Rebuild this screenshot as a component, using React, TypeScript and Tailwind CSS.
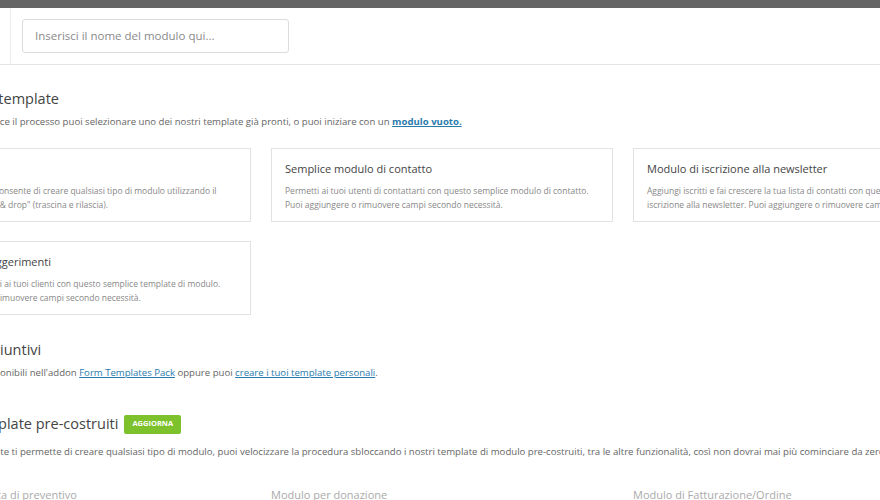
import React from 'react';

const font = { fontFamily: '"Open Sans", "Noto Sans", sans-serif' };

type Card = { title: string; lines: string[] };

const freeCards: Card[] = [
    {
        title: 'Modulo vuoto',
        lines: [
            'Il modulo vuoto ti consente di creare qualsiasi tipo di modulo utilizzando il',
            'il costruttore "drag & drop" (trascina e rilascia).',
        ],
    },
    {
        title: 'Semplice modulo di contatto',
        lines: [
            'Permetti ai tuoi utenti di contattarti con questo semplice modulo di contatto.',
            'Puoi aggiungere o rimuovere campi secondo necessità.',
        ],
    },
    {
        title: 'Modulo di iscrizione alla newsletter',
        lines: [
            'Aggiungi iscritti e fai crescere la tua lista di contatti con questo modulo di',
            'iscrizione alla newsletter. Puoi aggiungere o rimuovere campi secondo necessità.',
        ],
    },
    {
        title: 'Modulo dei suggerimenti',
        lines: [
            'Chiedi suggerimenti ai tuoi clienti con questo semplice template di modulo.',
            'Puoi aggiungere o rimuovere campi secondo necessità.',
        ],
    },
];

const lockedCards = ['Modulo di richiesta di preventivo', 'Modulo per donazione', 'Modulo di Fatturazione/Ordine'];

function TemplateCard({ card }: { card: Card }) {
    return (
        <div className="h-[74px] border border-[#e2e2e2] bg-white px-[13px] pt-[11px]">
            <h4 className="text-[11px] leading-[18px] text-[#444] whitespace-nowrap">{card.title}</h4>
            <p className="mt-[6px] text-[8.5px] leading-[14px] text-[#888] whitespace-nowrap">
                {card.lines[0]}
                <br />
                {card.lines[1]}
            </p>
        </div>
    );
}

export default function App() {
    return (
        <div className="w-[880px] h-[500px] overflow-hidden bg-white" style={font}>
            <div className="h-2 bg-[#656565]"></div>

            {/* Barra del nome */}
            <div className="flex h-[57px] border-b border-[#e3e3e3]">
                <div className="w-[11px] border-r border-[#ececec]"></div>
                <div className="pl-[11px] pt-[11px]">
                    <div className="w-[267px] h-[34px] border border-[#dcdcdc] rounded-[3px] flex items-center px-[12px]">
                        <span className="text-[11.5px] text-[#8a8a8a]">Inserisci il nome del modulo qui...</span>
                    </div>
                </div>
            </div>

            <div className="ml-[-91px] w-[1100px]">
                <h2 className="mt-[23px] text-[14.5px] leading-[22px] text-[#444] whitespace-nowrap">Seleziona un template</h2>
                <p className="mt-[4px] text-[9.6px] leading-[16px] text-[#666] whitespace-nowrap">
                    Per rendere più veloce il processo puoi selezionare uno dei nostri template già pronti, o puoi iniziare con un{' '}
                    <a className="font-bold text-[#2a7bad] underline">modulo vuoto.</a>
                </p>

                <div className="mt-[18px] grid grid-cols-[342px_342px_342px] gap-x-[20px] gap-y-[19px]">
                    {freeCards.map((c) => (
                        <TemplateCard key={c.title} card={c} />
                    ))}
                </div>

                <h2 className="mt-[24px] text-[14.5px] leading-[22px] text-[#444] whitespace-nowrap">Template aggiuntivi</h2>
                <p className="mt-[4px] text-[9.6px] leading-[16px] text-[#666] whitespace-nowrap">
                    I template sono disponibili nell'addon{' '}
                    <a className="text-[#2a7bad] underline">Form Templates Pack</a> oppure puoi{' '}
                    <a className="text-[#2a7bad] underline">creare i tuoi template personali</a>.
                </p>

                <div className="mt-[32px] flex items-center gap-[6px]">
                    <h2 className="text-[14.5px] leading-[22px] text-[#444] whitespace-nowrap">Sblocca i template pre-costruiti</h2>
                    <span className="h-[19px] px-[8px] rounded-[2px] bg-[#7dc22c] text-white text-[7.5px] font-bold flex items-center">
                        AGGIORNA
                    </span>
                </div>
                <p className="mt-[9px] text-[9.6px] leading-[16px] text-[#666] whitespace-nowrap">
                    Pur se Formidable Lite ti permette di creare qualsiasi tipo di modulo, puoi velocizzare la procedura sbloccando i nostri template di modulo pre-costruiti, tra le altre funzionalità, così non dovrai mai più cominciare da zero.
                </p>

                <div className="mt-[26px] grid grid-cols-[342px_342px_342px] gap-x-[20px]">
                    {lockedCards.map((t) => (
                        <h4 key={t} className="text-[11px] leading-[18px] text-[#aaa] whitespace-nowrap">{t}</h4>
                    ))}
                </div>
            </div>
        </div>
    );
}
